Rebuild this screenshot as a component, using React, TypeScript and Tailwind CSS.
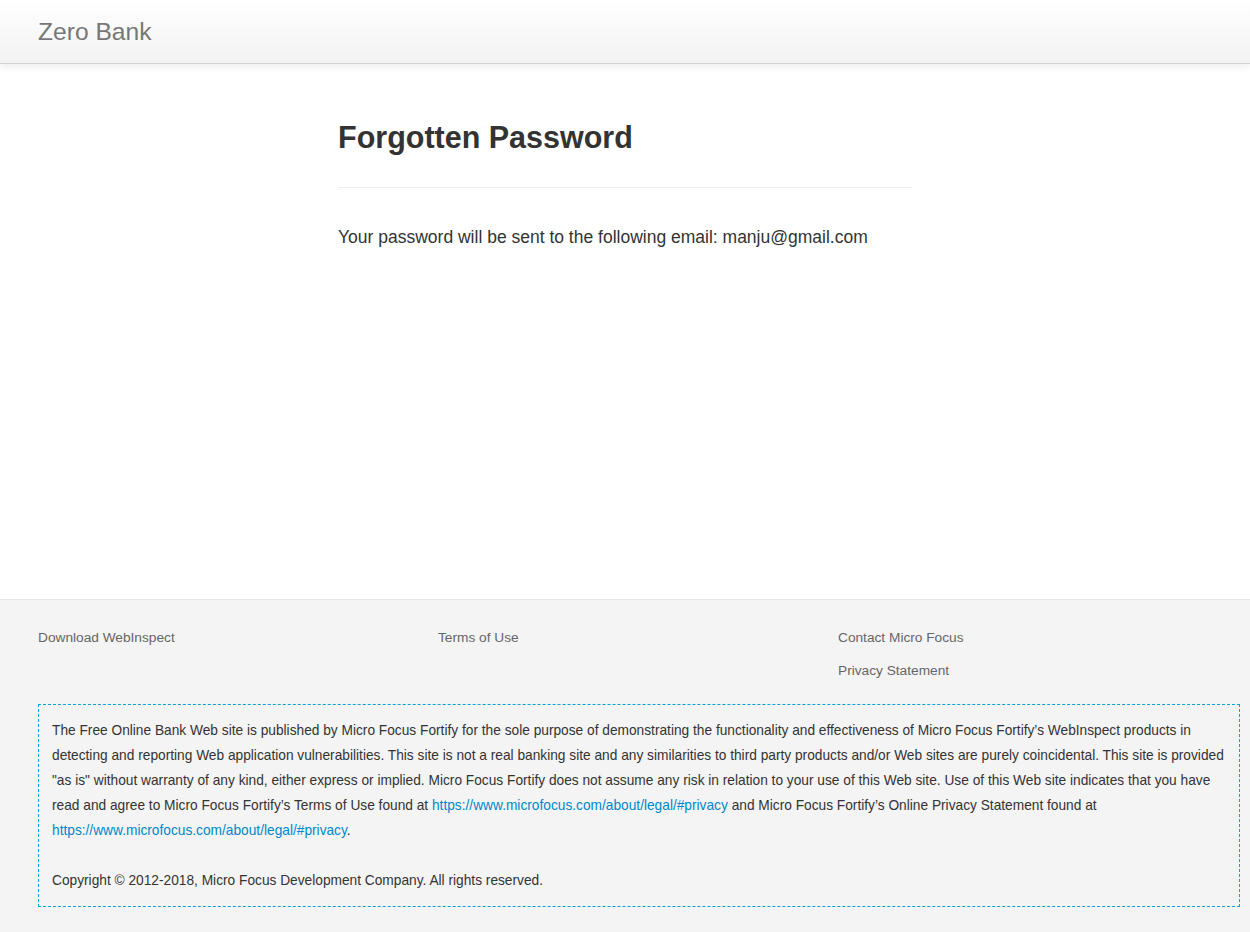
const linkCls = "text-[#0088cc] hover:underline";

const FooterLink: React.FC<{ label: string }> = ({ label }) => (
  <a href="#" className="block text-[13.7px] leading-[20px] text-[#666]">
    {label}
  </a>
);

export default function App() {
  return (
    <div className="flex min-h-screen flex-col bg-white font-['Liberation_Sans',Arial,sans-serif] text-[#333]">
      <header className="relative z-10 flex h-[64px] items-center border-b border-[#d4d4d4] bg-linear-to-b from-white to-[#f2f2f2] px-[38px] shadow-[0_1px_10px_rgba(0,0,0,0.1)]">
        <a href="#" className="text-[24.6px] leading-[30px] text-[#777]">
          Zero Bank
        </a>
      </header>

      <main className="h-[535px]">
        <div className="mx-auto w-[574px] pt-[56px]">
          <h2 className="text-[30.5px] font-bold leading-[34px] text-[#333]">
            Forgotten Password
          </h2>
          <hr className="mt-[33px] border-t border-[#eee]" />
          <p className="mt-[37px] text-[17.5px] leading-[25px] text-[#333]">
            Your password will be sent to the following email: manju@gmail.com
          </p>
        </div>
      </main>

      <footer className="flex-1 border-t border-[#e5e5e5] bg-[#f4f4f4] pb-[26px] pl-[38px] pr-[10px] pt-[28px]">
        <div className="grid grid-cols-[400px_400px_400px]">
          <div>
            <FooterLink label="Download WebInspect" />
          </div>
          <div>
            <FooterLink label="Terms of Use" />
          </div>
          <div className="flex flex-col gap-[13px]">
            <FooterLink label="Contact Micro Focus" />
            <FooterLink label="Privacy Statement" />
          </div>
        </div>

        <div className="mt-[23px] border border-dashed border-[#0aa0dc] py-[13px] pl-[13px] pr-[2px] text-[13.72px] leading-[25px] text-[#333]">
          The Free Online Bank Web site is published by Micro Focus Fortify for the sole purpose of demonstrating the functionality and effectiveness of Micro Focus Fortify’s WebInspect products in
          <br />
          detecting and reporting Web application vulnerabilities. This site is not a real banking site and any similarities to third party products and/or Web sites are purely coincidental. This site is provided
          <br />
          "as is" without warranty of any kind, either express or implied. Micro Focus Fortify does not assume any risk in relation to your use of this Web site. Use of this Web site indicates that you have
          <br />
          read and agree to Micro Focus Fortify’s Terms of Use found at{" "}
          <a href="#" className={linkCls}>
            https://www.microfocus.com/about/legal/#privacy
          </a>{" "}
          and Micro Focus Fortify’s Online Privacy Statement found at
          <br />
          <a href="#" className={linkCls}>
            https://www.microfocus.com/about/legal/#privacy
          </a>
          .
          <br />
          <br />
          Copyright © 2012-2018, Micro Focus Development Company. All rights reserved.
        </div>
      </footer>
    </div>
  );
}
